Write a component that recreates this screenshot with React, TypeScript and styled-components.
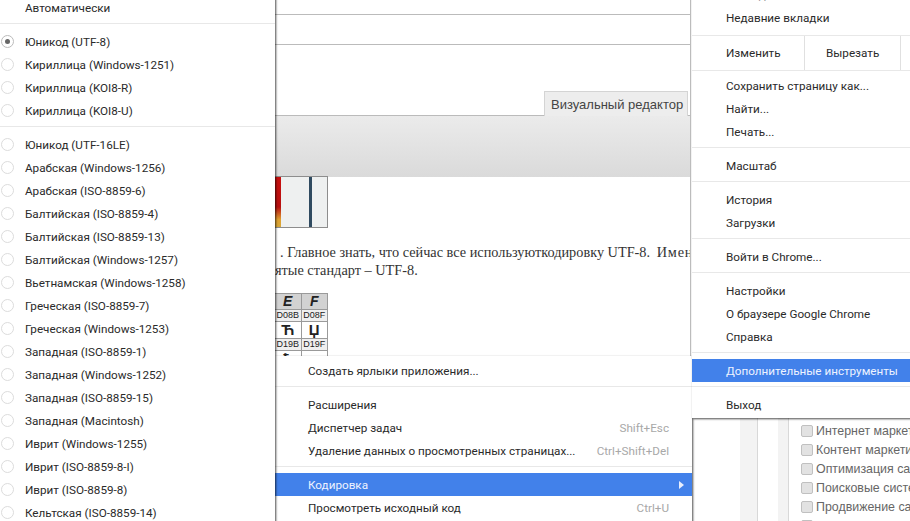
import React from 'react';
import styled, {createGlobalStyle} from 'styled-components';

const GlobalStyle = createGlobalStyle`
  html, body {
    margin: 0;
    padding: 0;
    background: #fff;
    overflow: hidden;
  }
`;

const Page = styled.div`
  position: relative;
  display: flex;
  width: 910px;
  height: 521px;
  overflow: hidden;
  background: #fff;
  font-family: Roboto, 'Open Sans', sans-serif;
`;

const Editor = styled.div`
  box-sizing: border-box;
  flex: none;
  width: 417px;
  height: 521px;
  margin-left: 274px;
  padding-top: 14px;
  overflow: hidden;
  border-right: 1px solid #bdbdbd;
`;

const Rule = styled.div`
  height: 30px;
  border-top: 1px solid #bbb;
  box-sizing: border-box;
`;

const TabRow = styled.div`
  display: flex;
  justify-content: flex-end;
  align-items: flex-end;
  height: 72px;
  padding-right: 2px;
  box-sizing: border-box;
  border-top: 1px solid #bbb;
  border-bottom: 1px solid #bbb;
`;

const Tab = styled.div`
  box-sizing: border-box;
  height: 25px;
  width: 144px;
  margin-bottom: -1px;
  padding: 4px 0 0 6px;
  background: #ededed;
  border: 1px solid #d4d4d4;
  border-bottom: 0;
  font-family: 'Liberation Sans', sans-serif;
  font-size: 13px;
  line-height: 17px;
  color: #444;
`;

const Band = styled.div`
  height: 61px;
  background: linear-gradient(#ebebeb, #dadada);
`;

const Thumb = styled.div`
  box-sizing: border-box;
  display: flex;
  width: 54px;
  height: 52px;
  margin-top: -1px;
  background: #eef0f0;
  border: 1px solid #8d8d8d;
  border-left: 0;
`;

const ThumbRed = styled.div`
  width: 7px;
  background: linear-gradient(#c8100f 0%, #b81010 60%, #e0a030 85%, #d8a838 100%);
`;

const ThumbStripe = styled.div`
  width: 3px;
  margin-left: 28px;
  background: #2f4a60;
`;

const Paragraph = styled.p`
  margin: 15px 0 14px;
  padding-left: 6px;
  font-family: 'Liberation Serif', serif;
  font-size: 14.3px;
  line-height: 18px;
  color: #333;
  white-space: nowrap;
`;

const SecondLine = styled.span`
  margin-left: -5px;
`;

const SpacedWord = styled.span`
  margin-left: 3px;
  letter-spacing: 0.8px;
`;

const CodeTable = styled.table`
  border-collapse: collapse;
  table-layout: fixed;
  width: 54px;
  font-family: 'Liberation Sans', sans-serif;
  color: #222;
`;

const HeadCell = styled.th`
  height: 15px;
  padding: 0;
  background: #d2d2d2;
  border: 1px solid #9a9a9a;
  font-size: 14px;
  font-style: italic;
  font-weight: bold;
  line-height: 15px;
`;

const CodeCell = styled.td`
  height: 11px;
  padding: 0;
  background: #efefef;
  border: 1px solid #9a9a9a;
  font-size: 9px;
  line-height: 11px;
  text-align: center;
  overflow: hidden;
`;

const GlyphCell = styled.td`
  height: 16px;
  padding: 0;
  border: 1px solid #9a9a9a;
  font-size: 15px;
  font-weight: bold;
  line-height: 16px;
  text-align: center;
`;

const Sidebar = styled.div`
  flex: 1;
  display: flex;
  height: 521px;
  padding-left: 49px;
  background: #fff;
`;

const Gutter = styled.div<{$width: number; $gap: number}>`
  flex: none;
  width: ${p => p.$width}px;
  margin-right: ${p => p.$gap}px;
  background: #f3f3f3;
  border-right: 1px solid #d8d8d8;
`;

const CheckList = styled.div`
  flex: none;
  width: 110px;
  padding-top: 421px;
  overflow: hidden;
`;

const CheckRow = styled.div`
  display: flex;
  align-items: center;
  gap: 3px;
  height: 19px;
  font-family: 'Liberation Sans', sans-serif;
  font-size: 12.4px;
  color: #666;
  white-space: nowrap;
`;

const CheckBox = styled.span`
  flex: none;
  box-sizing: border-box;
  width: 12px;
  height: 12px;
  background: #e2e2e2;
  border: 1px solid #c0c0c0;
  border-radius: 2px;
`;

const Menu = styled.div`
  position: absolute;
  box-sizing: border-box;
  background: #fff;
  font-size: 11.7px;
  color: #2a2a2a;
  box-shadow: 1px 1px 2px rgba(0, 0, 0, 0.7);
`;

const EncodingMenu = styled(Menu)`
  top: -4px;
  left: 0;
  width: 275px;
  height: 540px;
  z-index: 3;
`;

const ToolsMenu = styled(Menu)`
  top: 356px;
  left: 274px;
  width: 418px;
  height: 180px;
  padding-top: 3px;
  z-index: 1;
`;

const ChromeMenu = styled(Menu)`
  top: -17px;
  left: 692px;
  width: 230px;
  height: 435px;
  z-index: 2;
`;

const Item = styled.div<{$active?: boolean; $indent: number}>`
  display: flex;
  align-items: center;
  height: 23px;
  padding: 0 23px 0 ${p => p.$indent}px;
  white-space: nowrap;
  background: ${p => (p.$active ? '#4281ea' : 'transparent')};
  color: ${p => (p.$active ? '#eef3ff' : 'inherit')};
`;

const Radio = styled.span<{$checked?: boolean}>`
  flex: none;
  display: flex;
  align-items: center;
  justify-content: center;
  box-sizing: border-box;
  width: 13px;
  height: 13px;
  margin: 0 11px 0 1px;
  border: 1px solid ${p => (p.$checked ? '#bbb' : '#dcdcdc')};
  border-radius: 50%;
  &::after {
    content: '';
    width: 5px;
    height: 5px;
    border-radius: 50%;
    background: ${p => (p.$checked ? '#666' : 'transparent')};
  }
`;

const Shortcut = styled.span`
  margin-left: auto;
  color: #a8a8a8;
`;

const Arrow = styled.span`
  margin-left: auto;
  margin-right: -15px;
  border-left: 5px solid #e8eefc;
  border-top: 4px solid transparent;
  border-bottom: 4px solid transparent;
`;

const Separator = styled.div`
  height: 1px;
  margin: 4px 0 6px;
  background: #e8e8e8;
`;

const EditRow = styled.div`
  box-sizing: border-box;
  display: flex;
  align-items: center;
  height: 36px;
  margin: 6px 0 3px;
  padding-left: 34px;
  border-top: 1px solid #e8e8e8;
  border-bottom: 1px solid #e8e8e8;
`;

const EditCell = styled.div<{$width: number}>`
  flex: none;
  display: flex;
  align-items: center;
  align-self: stretch;
  box-sizing: border-box;
  width: ${p => p.$width}px;
`;

const EditDivided = styled(EditCell)`
  padding-left: 21px;
  border-left: 1px solid #e0e0e0;
`;

const EditEnd = styled(EditCell)`
  border-left: 1px solid #e0e0e0;
`;

const encodingTop = ['Юникод (UTF-8)', 'Кириллица (Windows-1251)', 'Кириллица (KOI8-R)', 'Кириллица (KOI8-U)'];

const encodingRest = [
  'Юникод (UTF-16LE)',
  'Арабская (Windows-1256)',
  'Арабская (ISO-8859-6)',
  'Балтийская (ISO-8859-4)',
  'Балтийская (ISO-8859-13)',
  'Балтийская (Windows-1257)',
  'Вьетнамская (Windows-1258)',
  'Греческая (ISO-8859-7)',
  'Греческая (Windows-1253)',
  'Западная (ISO-8859-1)',
  'Западная (Windows-1252)',
  'Западная (ISO-8859-15)',
  'Западная (Macintosh)',
  'Иврит (Windows-1255)',
  'Иврит (ISO-8859-8-I)',
  'Иврит (ISO-8859-8)',
  'Кельтская (ISO-8859-14)'
];

const topics = [
  'Интернет маркетинг',
  'Контент маркетинг',
  'Оптимизация сайта',
  'Поисковые системы',
  'Продвижение сайта',
  'Реклама'
];

const renderNames = (names: string[]) =>
  names.map(name => (
    <Item key={name} $indent={34}>
      {name}
    </Item>
  ));

export default function App() {
  return (
    <Page>
      <GlobalStyle />
      <Editor>
        <Rule />
        <TabRow>
          <Tab>Визуальный редактор</Tab>
        </TabRow>
        <Band />
        <Thumb>
          <ThumbRed />
          <ThumbStripe />
        </Thumb>
        <Paragraph>
          . Главное знать, что сейчас все используюткодировку UTF-8. <SpacedWord>Именно</SpacedWord>
          <br />
          <SecondLine>ятые стандарт – UTF-8.</SecondLine>
        </Paragraph>
        <CodeTable>
          <thead>
            <tr>
              <HeadCell>E</HeadCell>
              <HeadCell>F</HeadCell>
            </tr>
          </thead>
          <tbody>
            <tr>
              <CodeCell>D08B</CodeCell>
              <CodeCell>D08F</CodeCell>
            </tr>
            <tr>
              <GlyphCell>Ћ</GlyphCell>
              <GlyphCell>Џ</GlyphCell>
            </tr>
            <tr>
              <CodeCell>D19B</CodeCell>
              <CodeCell>D19F</CodeCell>
            </tr>
            <tr>
              <GlyphCell>ћ</GlyphCell>
              <GlyphCell>џ</GlyphCell>
            </tr>
          </tbody>
        </CodeTable>
      </Editor>
      <Sidebar>
        <Gutter $width={17} $gap={20} />
        <Gutter $width={10} $gap={12} />
        <CheckList>
          {topics.map(topic => (
            <CheckRow key={topic}>
              <CheckBox />
              {topic}
            </CheckRow>
          ))}
        </CheckList>
      </Sidebar>

      <EncodingMenu>
        <Item $indent={25}>Автоматически</Item>
        <Separator />
        {encodingTop.map((name, index) => (
          <Item key={name} $indent={0}>
            <Radio $checked={index === 0} />
            {name}
          </Item>
        ))}
        <Separator />
        {encodingRest.map(name => (
          <Item key={name} $indent={0}>
            <Radio />
            {name}
          </Item>
        ))}
      </EncodingMenu>

      <ToolsMenu>
        <Item $indent={34}>Создать ярлыки приложения...</Item>
        <Separator />
        <Item $indent={34}>Расширения</Item>
        <Item $indent={34}>
          Диспетчер задач<Shortcut>Shift+Esc</Shortcut>
        </Item>
        <Item $indent={34}>
          Удаление данных о просмотренных страницах...<Shortcut>Ctrl+Shift+Del</Shortcut>
        </Item>
        <Separator />
        <Item $indent={34} $active>
          Кодировка
          <Arrow />
        </Item>
        <Item $indent={34}>
          Просмотреть исходный код<Shortcut>Ctrl+U</Shortcut>
        </Item>
      </ToolsMenu>

      <ChromeMenu>
        {renderNames(['Закладки', 'Недавние вкладки'])}
        <EditRow>
          <EditCell $width={78}>Изменить</EditCell>
          <EditDivided $width={96}>Вырезать</EditDivided>
          <EditEnd $width={20} />
        </EditRow>
        {renderNames(['Сохранить страницу как...', 'Найти...', 'Печать...'])}
        <Separator />
        {renderNames(['Масштаб'])}
        <Separator />
        {renderNames(['История', 'Загрузки'])}
        <Separator />
        {renderNames(['Войти в Chrome...'])}
        <Separator />
        {renderNames(['Настройки', 'О браузере Google Chrome', 'Справка'])}
        <Separator />
        <Item $indent={34} $active>
          Дополнительные инструменты
        </Item>
        <Separator />
        {renderNames(['Выход'])}
      </ChromeMenu>
    </Page>
  );
}
